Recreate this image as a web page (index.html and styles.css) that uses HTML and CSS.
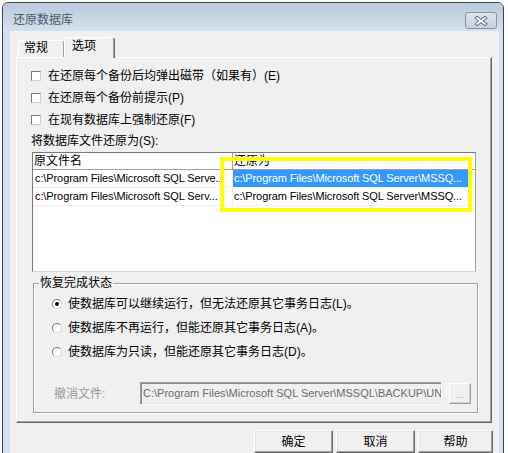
FILE: index.html
```html
<!DOCTYPE html>
<html lang="zh-CN">
<head>
<meta charset="utf-8">
<title>还原数据库</title>
<link rel="stylesheet" href="styles.css">
</head>
<body>
<div class="window">
  <div class="titlebar">
    <span class="title">还原数据库</span>
    <span class="close">
      <svg width="14" height="10" viewBox="0 0 14 10">
        <path d="M3 2 L11 8 M11 2 L3 8" stroke="#5a6474" stroke-width="3.6" stroke-linecap="square" fill="none"/>
        <path d="M3 2 L11 8 M11 2 L3 8" stroke="#ffffff" stroke-width="1.8" stroke-linecap="square" fill="none"/>
      </svg>
    </span>
  </div>
  <div class="client">
    <div class="tabs">
      <div class="tab">常规</div>
      <div class="tab active">选项</div>
    </div>
    <div class="panel">
      <div class="check-row"><span class="checkbox"></span><span>在还原每个备份后均弹出磁带（如果有）(E)</span></div>
      <div class="check-row"><span class="checkbox"></span><span>在还原每个备份前提示(P)</span></div>
      <div class="check-row short"><span class="checkbox"></span><span>在现有数据库上强制还原(F)</span></div>
      <div class="label-row">将数据库文件还原为(S):</div>
      <div class="grid">
        <div class="grid-head">
          <div class="hcell c1">原文件名</div>
          <div class="hcell c2">还原为</div>
        </div>
        <div class="grid-row">
          <div class="cell c1">c:\Program Files\Microsoft SQL Serve...</div>
          <div class="cell c2 selected">c:\Program Files\Microsoft SQL Server\MSSQ...</div>
        </div>
        <div class="grid-row">
          <div class="cell c1">c:\Program Files\Microsoft SQL Serv...</div>
          <div class="cell c2">c:\Program Files\Microsoft SQL Server\MSSQ...</div>
        </div>
        <div class="highlight"></div>
      </div>
      <div class="group">
        <div class="group-title">恢复完成状态</div>
        <div class="radio-row"><span class="radio checked"></span><span>使数据库可以继续运行，但无法还原其它事务日志(L)。</span></div>
        <div class="radio-row"><span class="radio"></span><span>使数据库不再运行，但能还原其它事务日志(A)。</span></div>
        <div class="radio-row"><span class="radio"></span><span>使数据库为只读，但能还原其它事务日志(D)。</span></div>
        <div class="undo-row">
          <span class="undo-label">撤消文件:</span>
          <div class="textbox">C:\Program Files\Microsoft SQL Server\MSSQL\BACKUP\UN</div>
          <div class="browse">...</div>
        </div>
      </div>
    </div>
    <div class="buttons">
      <div class="btn">确定</div>
      <div class="btn">取消</div>
      <div class="btn last">帮助</div>
    </div>
  </div>
</div>
</body>
</html>
```
FILE: styles.css
```css
* { box-sizing: border-box; }
html, body { margin: 0; padding: 0; }
body {
  width: 508px;
  height: 453px;
  overflow: hidden;
  background: #ffffff;
  font-family: "Liberation Sans", "Noto Sans CJK SC", sans-serif;
  font-size: 12px;
  color: #000;
}
.window {
  margin: 2px 0 0 2px;
  width: 502px;
  height: 460px;
  border: 1px solid #3d4650;
  border-radius: 6px 6px 0 0;
  background: #d4e0ee;
  display: flex;
  flex-direction: column;
  overflow: hidden;
}
.titlebar {
  height: 28px;
  flex: none;
  display: flex;
  align-items: flex-start;
  justify-content: space-between;
  padding: 0 6px 0 10px;
  background: linear-gradient(#b9c9da, #d4e0ee);
}
.title {
  margin-top: 9px;
  line-height: 14px;
  font-size: 12px;
  color: #4c5a6a;
  font-family: "Noto Sans CJK SC", sans-serif;
}
.close {
  margin-top: 9px;
  width: 32px;
  height: 17px;
  border: 1px solid #8593a5;
  border-radius: 3px;
  background: linear-gradient(#dce5ef, #c5d2e0);
  display: flex;
  align-items: center;
  justify-content: center;
}
.close svg { display: block; }
.client {
  flex: 1;
  margin: 0 4px 0 7px;
  background: #f0f0f0;
  padding-top: 6px;
}
.tabs {
  display: flex;
  align-items: flex-end;
  height: 20px;
  padding-left: 8px;
}
.tab {
  width: 46px;
  height: 17px;
  border: 1px solid;
  border-bottom: none;
  border-color: #ffffff #a0a0a0 transparent #ffffff;
  border-radius: 3px 3px 0 0;
  padding-left: 5px;
  line-height: 14px;
  background: #f0f0f0;
}
.tab.active {
  width: 51px;
  height: 21px;
  margin-bottom: -1px;
  position: relative;
  z-index: 1;
  padding-left: 7px;
  line-height: 16px;
  border-right-color: #696969;
  box-shadow: inset -1px 0 0 #a0a0a0;
}
.panel {
  margin-left: 6px;
  width: 476px;
  height: 366px;
  border: 1px solid;
  border-color: #ffffff #696969 #696969 #ffffff;
  box-shadow: inset -1px -1px 0 #a0a0a0;
  padding: 7px 0 0 14px;
  display: flex;
  flex-direction: column;
  align-items: flex-start;
}
.check-row {
  display: flex;
  align-items: center;
  gap: 7px;
  height: 22px;
  line-height: 14px;
}
.check-row.short { height: 21px; }
.checkbox {
  width: 10px;
  height: 10px;
  flex: none;
  border: 1px solid;
  border-color: #7a7a7a #cfcfcf #cfcfcf #7a7a7a;
  background: #ffffff;
}
.label-row {
  height: 21px;
  display: flex;
  align-items: center;
  line-height: 14px;
}
.grid {
  position: relative;
  margin: 1px 0 0 1px;
  width: 444px;
  height: 120px;
  border: 1px solid;
  border-color: #7a7a7a #a0a0a0 #d8d8d8 #7a7a7a;
  background: #ffffff;
}
.grid-head {
  display: flex;
  height: 17px;
  border-bottom: 1px solid #a0a0a0;
}
.hcell {
  line-height: 16px;
  padding-left: 1px;
}
.hcell.c1 {
  width: 200px;
  border-right: 1px solid #a0a0a0;
}
.hcell.c2 { flex: 1; }
.grid-row { display: flex; height: 18px; }
.cell {
  height: 18px;
  line-height: 17px;
  border-bottom: 1px solid #efefef;
  border-right: 1px solid #efefef;
  font-size: 11px;
  letter-spacing: -0.1px;
  white-space: nowrap;
  overflow: hidden;
}
.cell.c1 { width: 200px; padding-left: 2px; }
.cell.c2 { width: 237px; padding-left: 1px; }
.cell.selected { background: #3399ff; color: #ffffff; }
.highlight {
  position: absolute;
  left: 187px;
  top: 4px;
  width: 252px;
  height: 55px;
  border: 4px solid #ffff00;
}
.group {
  margin: 11px 0 0 2px;
  width: 445px;
  border: 1px solid #a0a0a0;
  box-shadow: 1px 1px 0 #ffffff, inset 1px 1px 0 #ffffff;
  padding: 0 6px 7px 18px;
  display: flex;
  flex-direction: column;
}
.group-title {
  align-self: flex-start;
  margin: -8px 0 2px -13px;
  padding: 0 1px;
  background: #f0f0f0;
  line-height: 14px;
}
.radio-row {
  display: flex;
  align-items: center;
  gap: 6px;
  height: 24px;
  line-height: 14px;
}
.radio {
  width: 10px;
  height: 10px;
  flex: none;
  border-radius: 50%;
  border: 1px solid;
  border-color: #7d7d7d #d6d6d6 #d6d6d6 #7d7d7d;
  background: #ffffff;
  display: flex;
  align-items: center;
  justify-content: center;
}
.radio.checked::after {
  content: "";
  width: 4px;
  height: 4px;
  border-radius: 50%;
  background: #000000;
}
.undo-row {
  display: flex;
  align-items: center;
  height: 23px;
  margin-top: 18px;
}
.undo-label {
  width: 86px;
  margin-left: 2px;
  color: #9a9a9a;
  line-height: 14px;
}
.textbox {
  width: 302px;
  height: 23px;
  border: 1px solid;
  border-color: #a0a0a0 #ffffff #ffffff #a0a0a0;
  box-shadow: inset 1px 1px 0 #8a8a8a, inset -1px -1px 0 #e3e3e3;
  background: #f0f0f0;
  color: #6d6d6d;
  font-size: 11px;
  letter-spacing: 0;
  padding-left: 2px;
  line-height: 21px;
  white-space: nowrap;
  overflow: hidden;
}
.browse {
  width: 22px;
  height: 21px;
  margin-left: 7px;
  border: 1px solid;
  border-color: #ffffff #a0a0a0 #a0a0a0 #ffffff;
  box-shadow: inset -1px -1px 0 #d0d0d0;
  background: #f0f0f0;
  color: #a0a0a0;
  font-size: 9px;
  text-align: center;
  line-height: 22px;
}
.buttons {
  display: flex;
  gap: 3px;
  margin-top: 7px;
  padding-left: 244px;
}
.btn {
  width: 79px;
  height: 23px;
  border: 1px solid;
  border-color: #ffffff #696969 #696969 #ffffff;
  box-shadow: inset -1px -1px 0 #a0a0a0, inset 1px 1px 0 #e3e3e3;
  background: #f0f0f0;
  text-align: center;
  line-height: 20px;
  font-family: "Noto Sans CJK SC", sans-serif;
}
.btn.last { width: 75px; }
```
